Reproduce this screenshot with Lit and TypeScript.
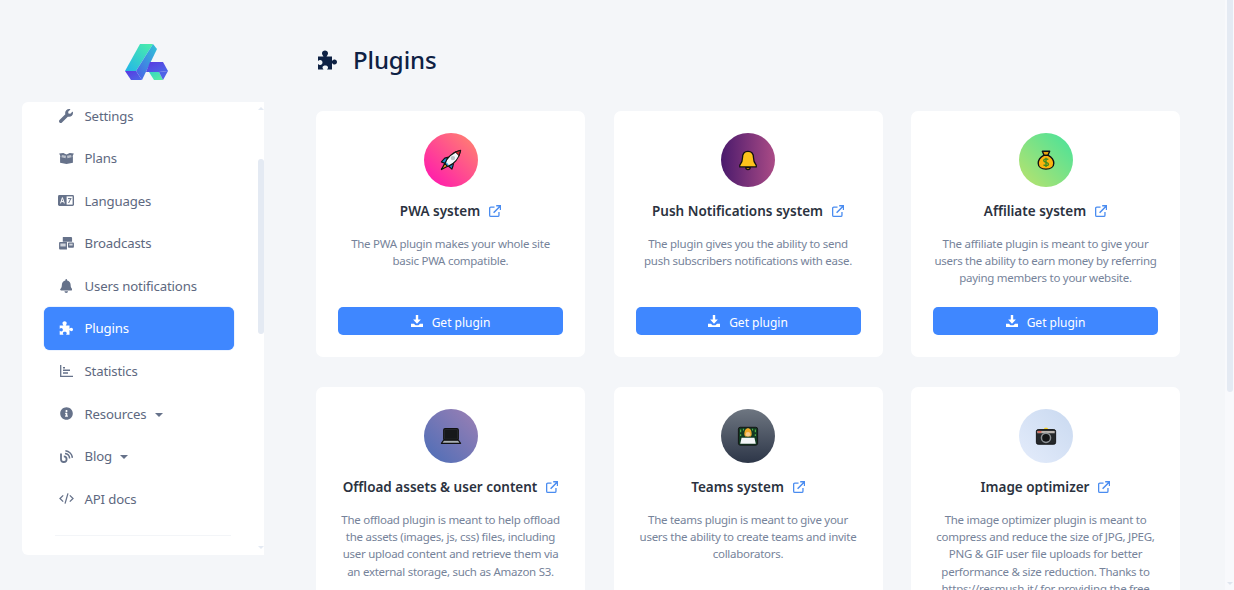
import { LitElement, html, css, svg } from "lit";
import { customElement } from "lit/decorators.js";

const PUZZLE = "M1 6.500H6.500C5.500 5 5 4.500 5 3.200 5 1.500 6.500.5 8 .5s3 1 3 2.700c0 1.300-.5 1.800-1.500 3.300H15V11c1-1 1.500-1.500 2.500-1.500C19 9.500 20 10.800 20 12s-1 2.500-2.500 2.500c-1 0-1.500-.5-2.500-1.500v6.500H10c1-1 1-1.500 1-2 0-1.500-1.500-2-2.700-2C7 15.500 5.500 16 5.500 17.500c0 .5.3 1 1 2H1V14c1 .8 1.500 1 2.200 1 1.300 0 2.300-1.300 2.300-2.500S4.500 10 3.200 10c-.7 0-1.200.3-2.200 1z";

const navIcons: Record<string, unknown> = {
  wrench: svg`<svg viewBox="0 0 512 512" width="14" height="14"><path fill="currentColor" d="M507.73 109.1c-2.24-9.03-13.54-12.09-20.12-5.51l-74.36 74.36-67.88-11.31-11.31-67.88 74.36-74.36c6.62-6.62 3.43-17.9-5.66-20.16-47.38-11.74-99.55.91-136.58 37.93-39.64 39.64-50.55 97.1-34.05 147.2L18.74 402.76c-24.99 24.99-24.99 65.51 0 90.5 24.99 24.99 65.51 24.99 90.5 0l213.21-213.21c50.12 16.71 107.47 5.68 147.37-34.22 37.07-37.07 49.7-89.32 37.91-136.73z"/></svg>`,
  box: svg`<svg viewBox="0 0 16 12" width="15" height="11"><path fill="currentColor" d="M0 .5 4.5 0 8 1.6 11.5 0 16 .5 14.6 3.6 15 4v6.5L8 12 1 10.5V4l.4-.4z"/><path fill="#fff" d="M3 2.3 7.5 3 7 5.6 2.4 4.6zM13 2.3 8.5 3 9 5.6l4.6-1z" opacity=".55"/></svg>`,
  language: svg`<svg viewBox="0 0 16 11" width="16" height="11"><rect width="16" height="11" rx="1.4" fill="currentColor"/><rect x="8.6" y="1.4" width="6" height="8.2" fill="#fff"/><path d="M2.5 8.4 4.4 2.6 6.3 8.4M3.2 6.6h2.4" fill="none" stroke="#fff" stroke-width="1"/><path d="M10 3.6h3.4M12.8 3.6 10.6 8" fill="none" stroke="currentColor" stroke-width="1"/></svg>`,
  broadcast: svg`<svg viewBox="0 0 16 14" width="15" height="13"><path fill="currentColor" d="M4 0h9a1 1 0 0 1 1 1v4H4z"/><path fill="currentColor" d="M1 5.5h7.5v8H1a1 1 0 0 1-1-1v-6a1 1 0 0 1 1-1z"/><rect x="9.6" y="6" width="6.4" height="5.5" rx="1" fill="currentColor"/><rect x="1.4" y="7" width="5.7" height="3.2" fill="#fff" opacity=".7"/><rect x="11" y="7.2" width="3.6" height="2" fill="#fff" opacity=".7"/></svg>`,
  bell: svg`<svg viewBox="0 0 448 512" width="12.5" height="14"><path fill="currentColor" d="M224 512c35.32 0 63.97-28.65 63.97-64H160.03c0 35.35 28.65 64 63.97 64zm215.39-149.71c-19.32-20.76-55.47-51.99-55.47-154.29 0-77.7-54.48-139.9-127.94-155.16V32c0-17.67-14.32-32-31.98-32s-31.98 14.33-31.98 32v20.84C118.56 68.1 64.08 130.3 64.08 208c0 102.3-36.15 133.53-55.47 154.29-6 6.45-8.66 14.16-8.61 21.71.11 16.4 12.98 32 32.1 32h383.8c19.12 0 32-15.6 32.1-32 .05-7.55-2.61-15.27-8.61-21.71z"/></svg>`,
  puzzle: svg`<svg viewBox="0 0 20 20" width="14" height="14"><path fill="currentColor" d="${PUZZLE}"/></svg>`,
  chart: svg`<svg viewBox="0 0 13 12" width="13" height="12"><path fill="none" stroke="currentColor" stroke-width="1.3" d="M.7 0v11.3H13"/><path fill="currentColor" d="M3 2h2v1.5H3zM3 4.6h7v1.5H3zM3 7.2h5v1.5H3z"/></svg>`,
  info: svg`<svg viewBox="0 0 512 512" width="13" height="13"><path fill="currentColor" d="M256 8C119.043 8 8 119.083 8 256c0 136.997 111.043 248 248 248s248-111.003 248-248C504 119.083 392.957 8 256 8zm0 110c23.196 0 42 18.804 42 42s-18.804 42-42 42-42-18.804-42-42 18.804-42 42-42zm56 254c0 6.627-5.373 12-12 12h-88c-6.627 0-12-5.373-12-12v-24c0-6.627 5.373-12 12-12h12v-64h-12c-6.627 0-12-5.373-12-12v-24c0-6.627 5.373-12 12-12h64c6.627 0 12 5.373 12 12v100h12c6.627 0 12 5.373 12 12v24z"/></svg>`,
  blog: svg`<svg viewBox="0 0 13 13" width="13" height="13"><g fill="none" stroke="currentColor"><path stroke-width="1.8" d="M1 3.5v5.7a2.8 2.8 0 1 0 2.8-2.8"/><path stroke-width="1.5" d="M5 3.6A5.2 5.2 0 0 1 9.6 8.6"/><path stroke-width="1.5" d="M5.4.8a8 8 0 0 1 7 7"/></g></svg>`,
  code: svg`<svg viewBox="0 0 16 12" width="15" height="11"><path fill="none" stroke="currentColor" stroke-width="1.4" d="M4.4 2.6.9 6l3.5 3.4M11.6 2.6 15.1 6l-3.5 3.4M9.6.4 6.4 11.6"/></svg>`,
};

const emojis: Record<string, unknown> = {
  rocket: svg`<svg viewBox="0 0 24 24" width="23" height="23"><path d="M6 15 2.500 21.500 9 18z" fill="#f59a23" stroke="#111" stroke-width="1.200" stroke-linejoin="round"/><path d="M6 9.500 10 8.500 6.500 15 2.500 13.500zM14.500 18l1-4.500-6 4 4 3.500z" fill="#1e88c9" stroke="#111" stroke-width="1.200" stroke-linejoin="round"/><path d="M6.500 15C8 9.500 13.500 3.500 22.500 1.500c-1.500 9-7.500 14.500-13 16.500z" fill="#f4f8fb" stroke="#111" stroke-width="1.300" stroke-linejoin="round"/><path d="M17 3 22.500 1.500 21 7z" fill="#d8262c" stroke="#111" stroke-width="1"/><circle cx="14.500" cy="9.500" r="2.300" fill="#b9c2c8"/><path d="M7.500 14.500 9.500 17" stroke="#3aa7dd" stroke-width="1.500"/></svg>`,
  bell: svg`<svg viewBox="0 0 24 24" width="22" height="22"><path d="M9.500 20a2.500 2.500 0 0 0 5 0z" fill="#d08a10" stroke="#111" stroke-width="1.300"/><path d="M12 2.500c-4 0-6 3-6 7 0 4.500-1.500 6-3 8v2h18v-2c-1.500-2-3-3.500-3-8 0-4-2-7-6-7z" fill="#fcc21b" stroke="#111" stroke-width="1.400" stroke-linejoin="round"/></svg>`,
  money: svg`<svg viewBox="0 0 24 24" width="22" height="22"><path d="M8 2.500h8l-2 4.500h-4z" fill="#e8a70c" stroke="#111" stroke-width="1.500" stroke-linejoin="round"/><path d="M9.500 7h5c3.500 2 6 5 6 8.500 0 4-3.500 6.500-8.500 6.500s-8.500-2.500-8.500-6.500C3.500 12 6 9 9.500 7z" fill="#fbb40f" stroke="#111" stroke-width="1.500"/><path d="M14.500 11.500c-1-1-5-1.200-5 1 0 2.500 5.200 1.500 5.200 4 0 2.200-4.200 2-5.400.8M12 9.500v10" fill="none" stroke="#3e8e1f" stroke-width="1.500"/></svg>`,
  laptop: svg`<svg viewBox="0 0 24 24" width="22" height="22"><rect x="4" y="4" width="16" height="12.500" rx="1.500" fill="#2a2d31" stroke="#111" stroke-width="1.200"/><rect x="5.500" y="5.500" width="13" height="9.500" fill="#16181b"/><path d="M4 16.500h16l2.500 3.500h-21z" fill="#a9b0b5" stroke="#111" stroke-width="1.200" stroke-linejoin="round"/></svg>`,
  tech: svg`<svg viewBox="0 0 24 24" width="22" height="22"><rect x="1.500" y="2.500" width="21" height="19.500" rx="2" fill="#123a22" stroke="#111"/><path d="M4 5v3M4 10v2M20 5v3M20 10v2M7 4v2M17 4v2" stroke="#58b947" stroke-width="1.200"/><path d="M8 10c0-4 1.500-6.500 4-6.500s4 2.500 4 6.500c0 1-.5 2-1 2.500H9c-.5-.5-1-1.500-1-2.500z" fill="#f0a92a"/><circle cx="12" cy="10" r="2.500" fill="#f7c98a"/><path d="M3.500 20.500 5 14h14l1.500 6.500z" fill="#f3f5f7"/></svg>`,
  camera: svg`<svg viewBox="0 0 24 24" width="22" height="22"><path d="M9.500 5 10.500 3h3l1 2z" fill="#f9d423"/><rect x="1.500" y="5" width="21" height="16" rx="2" fill="#25282b" stroke="#0e0f10"/><rect x="2.500" y="6.500" width="19" height="2.500" fill="#b9b3ae"/><rect x="3" y="6.500" width="4" height="2" fill="#d96a5e"/><circle cx="12" cy="14" r="5" fill="#141517" stroke="#8b9094" stroke-width="1.600"/></svg>`,
};

const EXT = svg`<svg viewBox="0 0 13 13" width="12" height="12"><path fill="none" stroke="currentColor" stroke-width="1.400" d="M6 2.200H2a1.300 1.300 0 0 0-1.300 1.300V11A1.300 1.300 0 0 0 2 12.300h7.500A1.300 1.300 0 0 0 10.800 11V7.500"/><path fill="none" stroke="currentColor" stroke-width="1.600" d="M5 8.500 12 1.300M7.800.8h4.700v4.700"/></svg>`;
const DOWNLOAD = svg`<svg viewBox="0 0 13 13" width="12" height="12"><path fill="currentColor" d="M5.200 0h2.600v5h2.900L6.500 9.400 2.300 5h2.900zM0 9.400h3.200l1.700 1.600h3.200l1.700-1.600H13V13H0z"/></svg>`;

const NAV = [
  ["Settings", "wrench"],
  ["Plans", "box"],
  ["Languages", "language"],
  ["Broadcasts", "broadcast"],
  ["Users notifications", "bell"],
  ["Plugins", "puzzle", "active"],
  ["Statistics", "chart"],
  ["Resources", "info", "caret"],
  ["Blog", "blog", "caret"],
  ["API docs", "code"],
];

const PLUGINS = [
  { title: "PWA system", e: "rocket", g: "g-pink", d: "The PWA plugin makes your whole site basic PWA compatible.", btn: true },
  { title: "Push Notifications system", e: "bell", g: "g-purple", d: "The plugin gives you the ability to send push subscribers notifications with ease.", btn: true },
  { title: "Affiliate system", e: "money", g: "g-green", d: "The affiliate plugin is meant to give your users the ability to earn money by referring paying members to your website.", btn: true },
  { title: "Offload assets & user content", e: "laptop", g: "g-blue", d: "The offload plugin is meant to help offload the assets (images, js, css) files, including user upload content and retrieve them via an external storage, such as Amazon S3.", btn: false },
  { title: "Teams system", e: "tech", g: "g-dark", d: "The teams plugin is meant to give your users the ability to create teams and invite collaborators.", btn: false },
  { title: "Image optimizer", e: "camera", g: "g-light", d: "The image optimizer plugin is meant to compress and reduce the size of JPG, JPEG, PNG & GIF user file uploads for better performance & size reduction. Thanks to https://resmush.it/ for providing the free", btn: false },
];

@customElement("app-root")
export class AppRoot extends LitElement {
  static styles = css`
    :host {
      display: flex;
      width: 1234px;
      height: 590px;
      overflow: hidden;
      background: #f4f6f9;
      font-family: "Noto Sans", "Open Sans", sans-serif;
    }
    .side {
      flex: none;
      width: 316px;
      padding-left: 22px;
      box-sizing: border-box;
    }
    .logo {
      display: flex;
      justify-content: center;
      width: 242px;
      height: 102px;
      padding: 43px 0 0 7px;
      box-sizing: border-box;
    }
    .panel {
      width: 242px;
      height: 453px;
      background: #fff;
      border-radius: 6px 0 0 6px;
      display: flex;
      overflow: hidden;
    }
    .nav {
      flex: 1;
      margin-top: -7.600px;
      padding: 0 23px 0 22px;
      min-width: 0;
    }
    .item {
      display: flex;
      align-items: center;
      height: 42.550px;
      padding-left: 14px;
      border-radius: 6px;
      color: #5d6880;
      font-size: 13.200px;
      letter-spacing: -0.15px;
    }
    .item .ico {
      width: 16px;
      height: 16px;
      margin-right: 10.500px;
      display: flex;
      align-items: center;
      justify-content: center;
      color: #66728a;
    }
    .item.active {
      background: #3f87ff;
      color: #fff;
      box-shadow: 0 0 1px #3f87ff;
    }
    .item.active .ico { color: #fff; }
    .caret {
      width: 0;
      height: 0;
      margin-left: 8px;
      margin-top: 2px;
      border: 4.500px solid transparent;
      border-top-color: #66728a;
      border-bottom: 0;
    }
    .rule {
      height: 1px;
      margin: 15px 3px 0 11px;
      background: #f3f5f8;
    }
    .sbar {
      flex: none;
      width: 7px;
      display: flex;
      flex-direction: column;
      align-items: center;
      background: #fff;
    }
    .arrow-up, .arrow-down {
      width: 0;
      height: 0;
      border: 3px solid transparent;
    }
    .arrow-up { border-top: 0; border-bottom: 3px solid #e4eaf3; margin-top: 5px; }
    .arrow-down { border-bottom: 0; border-top: 3px solid #e4eaf3; margin-top: auto; margin-bottom: 6px; }
    .thumb {
      width: 6px;
      height: 175px;
      margin-top: 49px;
      background: #e4eaf3;
      border-radius: 3px;
    }
    .main {
      flex: none;
      width: 864px;
      min-width: 0;
    }
    .head {
      display: flex;
      align-items: center;
      height: 111px;
      padding-top: 8px;
      box-sizing: border-box;
      color: #0e2144;
      font-size: 24px;
      font-weight: 500;
      letter-spacing: -0.1px;
      gap: 16px;
    }
    .head svg { display: block; margin-left: 1px; }
    .grid {
      display: grid;
      grid-template-columns: repeat(3, 269px);
      gap: 30px 28.500px;
    }
    .card {
      background: #fff;
      border-radius: 7px;
      height: 246px;
      padding: 22px 22px;
      box-sizing: border-box;
      display: flex;
      flex-direction: column;
      align-items: center;
    }
    .card.cut { height: 400px; }
    .disc {
      width: 54px;
      height: 54px;
      border-radius: 50%;
      flex: none;
      display: flex;
      align-items: center;
      justify-content: center;
    }
    .g-pink { background: linear-gradient(45deg, #ff0fb4, #ff8a6b); }
    .g-purple { background: linear-gradient(90deg, #4a1a6c, #aa4b86); }
    .g-green { background: linear-gradient(45deg, #bde26c, #44e29c); }
    .g-blue { background: linear-gradient(45deg, #4a6db7, #9d80b4); }
    .g-dark { background: linear-gradient(0deg, #2d3648, #6e7681); }
    .g-light { background: linear-gradient(45deg, #e4ecfb, #c9d9f0); }
    .title {
      margin-top: 14px;
      display: flex;
      align-items: center;
      gap: 9px;
      height: 20px;
      font-size: 13.500px;
      font-weight: 600;
      color: #2b3240;
      white-space: nowrap;
    }
    .title svg { color: #4a8cf0; display: block; }
    .desc {
      margin: 13.500px 0 0;
      font-size: 11.500px;
      letter-spacing: -0.27px;
      line-height: 17.400px;
      text-align: center;
      color: #76839a;
    }
    .btn {
      margin-top: auto;
      width: 100%;
      height: 28px;
      flex: none;
      background: #3f87ff;
      color: #fff;
      border-radius: 5px;
      display: flex;
      align-items: center;
      justify-content: center;
      gap: 8px;
      font-size: 12px;
    }
    .btn svg { display: block; }
    .btn span { padding: 2px 0 0 1px; }
    .page-bar {
      flex: none;
      width: 9px;
      margin-left: 45px;
      background: #f8f9fc;
      display: flex;
      flex-direction: column;
    }
    .page-bar .pt {
      width: 6px;
      height: 392px;
      margin-left: 2px;
      background: #e4eaf3;
      border-radius: 0 0 3px 3px;
    }
    .page-bar .ad {
      width: 0;
      height: 0;
      border: 3px solid transparent;
      border-bottom: 0;
      border-top: 3px solid #dfe5ee;
      margin: auto auto 5px;
    }
  `;

  render() {
    return html`
      <div class="side">
        <div class="logo">
          <svg width="44" height="38" viewBox="0 0 44 38">
            <defs>
              <linearGradient id="a" x1="0" y1="1" x2="1" y2="0"><stop offset="0" stop-color="#22b4ea"/><stop offset="1" stop-color="#4cf0a8"/></linearGradient>
              <linearGradient id="b" x1="0" y1="1" x2="1" y2="0"><stop offset="0" stop-color="#4b5ae8"/><stop offset="1" stop-color="#2fc6d8"/></linearGradient>
              <linearGradient id="c" x1="0" y1="0" x2="1" y2="1"><stop offset="0" stop-color="#5a37e0"/><stop offset="1" stop-color="#4a6ae8"/></linearGradient>
              <linearGradient id="d" x1="0" y1="0" x2="1" y2="1"><stop offset="0" stop-color="#36d6c4"/><stop offset="1" stop-color="#5cf0a0"/></linearGradient>
            </defs>
            <polygon points="0,28 15,1 28,1 11,28" fill="url(#a)"/>
            <polygon points="28,1 32,6 17,37 11,28" fill="url(#b)"/>
            <polygon points="0,28 11,28 17,37 6,37" fill="url(#c)"/>
            <polygon points="25,19 38,19 43,28 34,29 21,29" fill="url(#c)"/>
            <polygon points="24,29 34,29 38,37 29,37" fill="url(#d)"/>
            <polygon points="34,29 43,28 38,37" fill="#4f63e6"/>
          </svg>
        </div>
        <div class="panel">
          <div class="nav">
            ${NAV.map(
              ([label, icon, flag]) => html`
                <div class="item ${flag === "active" ? "active" : ""}">
                  <span class="ico">${navIcons[icon]}</span>
                  <span>${label}</span>
                  ${flag === "caret" ? html`<span class="caret"></span>` : ""}
                </div>
              `
            )}
            <div class="rule"></div>
          </div>
          <div class="sbar">
            <span class="arrow-up"></span>
            <span class="thumb"></span>
            <span class="arrow-down"></span>
          </div>
        </div>
      </div>
      <div class="main">
        <div class="head">
          <svg viewBox="0 0 20 20" width="20" height="20"><path fill="currentColor" d="${PUZZLE}"/></svg>
          <span>Plugins</span>
        </div>
        <div class="grid">
          ${PLUGINS.map(
            (p) => html`
              <div class="card ${p.btn ? "" : "cut"}">
                <div class="disc ${p.g}">${emojis[p.e]}</div>
                <div class="title"><span>${p.title}</span>${EXT}</div>
                <p class="desc">${p.d}</p>
                ${p.btn ? html`<div class="btn">${DOWNLOAD}<span>Get plugin</span></div>` : ""}
              </div>
            `
          )}
        </div>
      </div>
      <div class="page-bar"><div class="pt"></div><div class="ad"></div></div>
    `;
  }
}
